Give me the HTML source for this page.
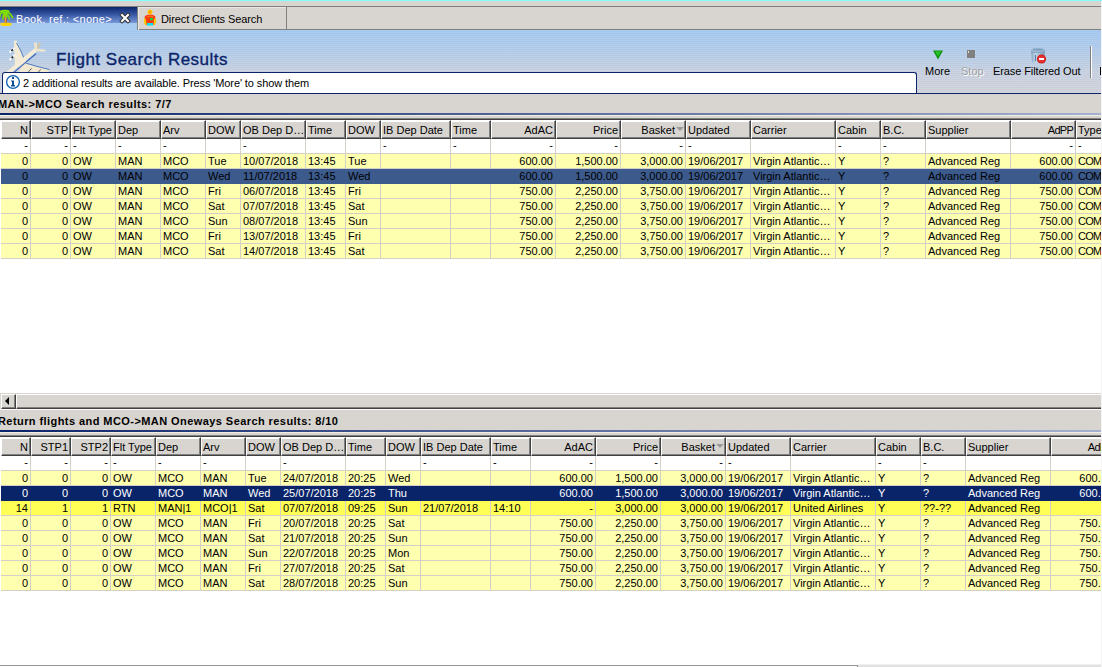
<!DOCTYPE html>
<html><head><meta charset="utf-8"><style>
*{margin:0;padding:0;box-sizing:border-box}
html,body{width:1102px;height:667px;overflow:hidden;background:#fff}
body{position:relative;font-family:"Liberation Sans", sans-serif;font-size:11px;color:#000}
.a{position:absolute}
.hdrrow{position:absolute;left:0;width:1101px;height:19px;background:#fff}
.hc{position:absolute;height:19px;background:#d8d5d0;border-top:1px solid #fff;border-left:1px solid #fff;
  border-right:1px solid #404040;border-bottom:1px solid #404040;
  padding:1px 1px 0 1px;line-height:16px;white-space:nowrap;overflow:hidden;box-shadow:inset -1px -1px 0 #808080, inset 0 1px 0 #fff}
.hc.r{text-align:right;padding-right:2px}
.frow{position:absolute;left:1px;width:1100px;height:15px;background:#fff}
.row{position:absolute;left:1px;width:1100px;height:15px;background:#ffffb0}
.row.sel1{background:#3c5a8c}
.row.sel2{background:#0a246a;color:#fff}
.row.rtn{background:#ffff55}
.c{position:absolute;top:0;height:14px;line-height:14px;padding:0 2px;white-space:nowrap;overflow:hidden}
.frow ~ .c{}
.c.r{text-align:right}
.vg{position:absolute;width:1px;background:#d4d0c8}
.hg{position:absolute;left:1px;width:1100px;height:1px;background:#d4d0c8}
.sort{position:absolute;left:54px;top:6px;width:0;height:0;border-left:4px solid transparent;border-right:4px solid transparent;border-top:4px solid #9a9a9a}
</style></head>
<body>
<div class="a" style="left:0;top:0;width:1102px;height:1px;background:#80ffff"></div>
<div class="a" style="left:0;top:1px;width:1101px;height:29px;background:#d8d5d0"></div>
<div class="a" style="left:0;top:6px;width:1101px;height:1px;background:#808080"></div>
<div class="a" style="left:137px;top:29px;width:964px;height:1px;background:#808080"></div>
<div class="a" style="left:0;top:7px;width:137px;height:23px;background:linear-gradient(#0a246a 0px,#3a5aa6 8px,#7494d6 15.5px,#a6caf0 16px,#a6caf0 23px)"></div>
<div class="a" style="left:16px;top:12px;color:#fff;line-height:14px;letter-spacing:0.3px">Book. ref.: &lt;none&gt;</div>
<div class="a" style="left:137px;top:6px;width:150px;height:24px;border:1px solid #808080;border-bottom:none;box-shadow:inset 1px 1px 0 #ebe8e2"></div>
<div class="a" style="left:161px;top:12px;line-height:14px;letter-spacing:-0.1px">Direct Clients Search</div>
<div class="a" style="left:0;top:30px;width:1101px;height:63px;background:repeating-linear-gradient(rgba(255,255,255,0.04) 0 1px,rgba(0,30,0,0.025) 1px 2px),linear-gradient(#a6caf2 0px,#b0ccee 15px,#bccfe6 30px,#cad2e2 42px,#d2d3dc 63px)"></div>
<div class="a" style="left:56px;top:50px;font-size:17px;letter-spacing:0.5px;color:#0a246a;line-height:20px;-webkit-text-stroke:0.35px #0a246a">Flight Search Results</div>
<div class="a" style="left:2px;top:72px;width:915px;height:21px;background:#fff;border:1px solid #0a246a;border-bottom:none;border-radius:3px 3px 0 0"></div>
<div class="a" style="left:23px;top:76px;line-height:14px;letter-spacing:-0.1px">2 additional results are available. Press 'More' to show them</div>
<div class="a" style="left:0;top:93px;width:1101px;height:1px;background:#0a246a"></div>
<div class="a" style="left:925px;top:64px;line-height:14px">More</div>
<div class="a" style="left:961px;top:64px;line-height:14px;color:#a0a0a0;text-shadow:1px 1px 0 #fff">Stop</div>
<div class="a" style="left:993px;top:64px;line-height:14px;letter-spacing:-0.1px">Erase Filtered Out</div>
<div class="a" style="left:1090px;top:46px;width:1px;height:32px;background:#808080;box-shadow:1px 0 0 #fff"></div>
<div class="a" style="left:0;top:94px;width:1101px;height:25px;background:#d8d5d0"></div>
<div class="a" style="left:-2px;top:97px;font-weight:bold;letter-spacing:0.43px;line-height:14px">MAN-&gt;MCO Search results: 7/7</div>
<div class="a" style="left:0;top:113px;width:1101px;height:2px;background:linear-gradient(90deg,#0a246a,#a6b0d0)"></div>
<div class="a" style="left:0;top:115px;width:1101px;height:1px;background:#f0ece0"></div>
<div class="a" style="left:0;top:118px;width:1101px;height:1px;background:#808080"></div>
<div class="a" style="left:0;top:119px;width:1101px;height:1px;background:#404040"></div>
<div class="hdrrow" style="top:120px"></div>
<div class="hc r" style="left:1px;top:120px;width:30px">N</div>
<div class="hc r" style="left:31px;top:120px;width:40px">STP</div>
<div class="hc" style="left:71px;top:120px;width:45px">Flt Type</div>
<div class="hc" style="left:116px;top:120px;width:45px">Dep</div>
<div class="hc" style="left:161px;top:120px;width:45px">Arv</div>
<div class="hc" style="left:206px;top:120px;width:35px">DOW</div>
<div class="hc" style="left:241px;top:120px;width:65px">OB Dep D…</div>
<div class="hc" style="left:306px;top:120px;width:40px">Time</div>
<div class="hc" style="left:346px;top:120px;width:35px">DOW</div>
<div class="hc" style="left:381px;top:120px;width:70px">IB Dep Date</div>
<div class="hc" style="left:451px;top:120px;width:40px">Time</div>
<div class="hc r" style="left:491px;top:120px;width:65px">AdAC</div>
<div class="hc r" style="left:556px;top:120px;width:65px">Price</div>
<div class="hc r" style="left:621px;top:120px;width:65px;padding-right:10px">Basket<i class="sort"></i></div>
<div class="hc" style="left:686px;top:120px;width:65px">Updated</div>
<div class="hc" style="left:751px;top:120px;width:85px">Carrier</div>
<div class="hc" style="left:836px;top:120px;width:45px">Cabin</div>
<div class="hc" style="left:881px;top:120px;width:45px">B.C.</div>
<div class="hc" style="left:926px;top:120px;width:85px">Supplier</div>
<div class="hc r" style="left:1011px;top:120px;width:65px;letter-spacing:-0.75px">AdPP</div>
<div class="hc" style="left:1076px;top:120px;width:65px">Type</div>
<div class="frow" style="top:139px"></div>
<div class="c r" style="left:1px;top:138px;width:29px;height:14px">-</div>
<div class="c r" style="left:31px;top:138px;width:39px;height:14px">-</div>
<div class="c" style="left:71px;top:138px;width:44px;height:14px">-</div>
<div class="c" style="left:116px;top:138px;width:44px;height:14px">-</div>
<div class="c" style="left:161px;top:138px;width:44px;height:14px">-</div>
<div class="c" style="left:206px;top:138px;width:34px;height:14px"></div>
<div class="c" style="left:241px;top:138px;width:64px;height:14px">-</div>
<div class="c" style="left:306px;top:138px;width:39px;height:14px"></div>
<div class="c" style="left:346px;top:138px;width:34px;height:14px"></div>
<div class="c" style="left:381px;top:138px;width:69px;height:14px">-</div>
<div class="c" style="left:451px;top:138px;width:39px;height:14px">-</div>
<div class="c r" style="left:491px;top:138px;width:64px;height:14px">-</div>
<div class="c r" style="left:556px;top:138px;width:64px;height:14px">-</div>
<div class="c r" style="left:621px;top:138px;width:64px;height:14px">-</div>
<div class="c" style="left:686px;top:138px;width:64px;height:14px">-</div>
<div class="c" style="left:751px;top:138px;width:84px;height:14px"></div>
<div class="c" style="left:836px;top:138px;width:44px;height:14px">-</div>
<div class="c" style="left:881px;top:138px;width:44px;height:14px">-</div>
<div class="c" style="left:926px;top:138px;width:84px;height:14px"></div>
<div class="c r" style="left:1011px;top:138px;width:64px;height:14px">-</div>
<div class="c" style="left:1076px;top:138px;width:64px;height:14px">-</div>
<div class="row" style="top:154px">
<div class="c r" style="left:0px;width:29px">0</div>
<div class="c r" style="left:30px;width:39px">0</div>
<div class="c" style="left:70px;width:44px">OW</div>
<div class="c" style="left:115px;width:44px">MAN</div>
<div class="c" style="left:160px;width:44px">MCO</div>
<div class="c" style="left:205px;width:34px">Tue</div>
<div class="c" style="left:240px;width:64px">10/07/2018</div>
<div class="c" style="left:305px;width:39px">13:45</div>
<div class="c" style="left:345px;width:34px">Tue</div>
<div class="c" style="left:380px;width:69px"></div>
<div class="c" style="left:450px;width:39px"></div>
<div class="c r" style="left:490px;width:64px">600.00</div>
<div class="c r" style="left:555px;width:64px">1,500.00</div>
<div class="c r" style="left:620px;width:64px">3,000.00</div>
<div class="c" style="left:685px;width:64px">19/06/2017</div>
<div class="c" style="left:750px;width:84px">Virgin Atlantic…</div>
<div class="c" style="left:835px;width:44px">Y</div>
<div class="c" style="left:880px;width:44px">?</div>
<div class="c" style="left:925px;width:84px">Advanced Reg</div>
<div class="c r" style="left:1010px;width:64px">600.00</div>
<div class="c" style="left:1075px;width:64px;letter-spacing:-0.7px">COM</div>
</div>
<div class="row sel1" style="top:169px">
<div class="c r" style="left:0px;width:29px">0</div>
<div class="c r" style="left:30px;width:39px">0</div>
<div class="c" style="left:70px;width:44px">OW</div>
<div class="c" style="left:115px;width:44px">MAN</div>
<div class="c" style="left:160px;width:44px">MCO</div>
<div class="c" style="left:205px;width:34px">Wed</div>
<div class="c" style="left:240px;width:64px">11/07/2018</div>
<div class="c" style="left:305px;width:39px">13:45</div>
<div class="c" style="left:345px;width:34px">Wed</div>
<div class="c" style="left:380px;width:69px"></div>
<div class="c" style="left:450px;width:39px"></div>
<div class="c r" style="left:490px;width:64px">600.00</div>
<div class="c r" style="left:555px;width:64px">1,500.00</div>
<div class="c r" style="left:620px;width:64px">3,000.00</div>
<div class="c" style="left:685px;width:64px">19/06/2017</div>
<div class="c" style="left:750px;width:84px">Virgin Atlantic…</div>
<div class="c" style="left:835px;width:44px">Y</div>
<div class="c" style="left:880px;width:44px">?</div>
<div class="c" style="left:925px;width:84px">Advanced Reg</div>
<div class="c r" style="left:1010px;width:64px">600.00</div>
<div class="c" style="left:1075px;width:64px;letter-spacing:-0.7px">COM</div>
</div>
<div class="row" style="top:184px">
<div class="c r" style="left:0px;width:29px">0</div>
<div class="c r" style="left:30px;width:39px">0</div>
<div class="c" style="left:70px;width:44px">OW</div>
<div class="c" style="left:115px;width:44px">MAN</div>
<div class="c" style="left:160px;width:44px">MCO</div>
<div class="c" style="left:205px;width:34px">Fri</div>
<div class="c" style="left:240px;width:64px">06/07/2018</div>
<div class="c" style="left:305px;width:39px">13:45</div>
<div class="c" style="left:345px;width:34px">Fri</div>
<div class="c" style="left:380px;width:69px"></div>
<div class="c" style="left:450px;width:39px"></div>
<div class="c r" style="left:490px;width:64px">750.00</div>
<div class="c r" style="left:555px;width:64px">2,250.00</div>
<div class="c r" style="left:620px;width:64px">3,750.00</div>
<div class="c" style="left:685px;width:64px">19/06/2017</div>
<div class="c" style="left:750px;width:84px">Virgin Atlantic…</div>
<div class="c" style="left:835px;width:44px">Y</div>
<div class="c" style="left:880px;width:44px">?</div>
<div class="c" style="left:925px;width:84px">Advanced Reg</div>
<div class="c r" style="left:1010px;width:64px">750.00</div>
<div class="c" style="left:1075px;width:64px;letter-spacing:-0.7px">COM</div>
</div>
<div class="row" style="top:199px">
<div class="c r" style="left:0px;width:29px">0</div>
<div class="c r" style="left:30px;width:39px">0</div>
<div class="c" style="left:70px;width:44px">OW</div>
<div class="c" style="left:115px;width:44px">MAN</div>
<div class="c" style="left:160px;width:44px">MCO</div>
<div class="c" style="left:205px;width:34px">Sat</div>
<div class="c" style="left:240px;width:64px">07/07/2018</div>
<div class="c" style="left:305px;width:39px">13:45</div>
<div class="c" style="left:345px;width:34px">Sat</div>
<div class="c" style="left:380px;width:69px"></div>
<div class="c" style="left:450px;width:39px"></div>
<div class="c r" style="left:490px;width:64px">750.00</div>
<div class="c r" style="left:555px;width:64px">2,250.00</div>
<div class="c r" style="left:620px;width:64px">3,750.00</div>
<div class="c" style="left:685px;width:64px">19/06/2017</div>
<div class="c" style="left:750px;width:84px">Virgin Atlantic…</div>
<div class="c" style="left:835px;width:44px">Y</div>
<div class="c" style="left:880px;width:44px">?</div>
<div class="c" style="left:925px;width:84px">Advanced Reg</div>
<div class="c r" style="left:1010px;width:64px">750.00</div>
<div class="c" style="left:1075px;width:64px;letter-spacing:-0.7px">COM</div>
</div>
<div class="row" style="top:214px">
<div class="c r" style="left:0px;width:29px">0</div>
<div class="c r" style="left:30px;width:39px">0</div>
<div class="c" style="left:70px;width:44px">OW</div>
<div class="c" style="left:115px;width:44px">MAN</div>
<div class="c" style="left:160px;width:44px">MCO</div>
<div class="c" style="left:205px;width:34px">Sun</div>
<div class="c" style="left:240px;width:64px">08/07/2018</div>
<div class="c" style="left:305px;width:39px">13:45</div>
<div class="c" style="left:345px;width:34px">Sun</div>
<div class="c" style="left:380px;width:69px"></div>
<div class="c" style="left:450px;width:39px"></div>
<div class="c r" style="left:490px;width:64px">750.00</div>
<div class="c r" style="left:555px;width:64px">2,250.00</div>
<div class="c r" style="left:620px;width:64px">3,750.00</div>
<div class="c" style="left:685px;width:64px">19/06/2017</div>
<div class="c" style="left:750px;width:84px">Virgin Atlantic…</div>
<div class="c" style="left:835px;width:44px">Y</div>
<div class="c" style="left:880px;width:44px">?</div>
<div class="c" style="left:925px;width:84px">Advanced Reg</div>
<div class="c r" style="left:1010px;width:64px">750.00</div>
<div class="c" style="left:1075px;width:64px;letter-spacing:-0.7px">COM</div>
</div>
<div class="row" style="top:229px">
<div class="c r" style="left:0px;width:29px">0</div>
<div class="c r" style="left:30px;width:39px">0</div>
<div class="c" style="left:70px;width:44px">OW</div>
<div class="c" style="left:115px;width:44px">MAN</div>
<div class="c" style="left:160px;width:44px">MCO</div>
<div class="c" style="left:205px;width:34px">Fri</div>
<div class="c" style="left:240px;width:64px">13/07/2018</div>
<div class="c" style="left:305px;width:39px">13:45</div>
<div class="c" style="left:345px;width:34px">Fri</div>
<div class="c" style="left:380px;width:69px"></div>
<div class="c" style="left:450px;width:39px"></div>
<div class="c r" style="left:490px;width:64px">750.00</div>
<div class="c r" style="left:555px;width:64px">2,250.00</div>
<div class="c r" style="left:620px;width:64px">3,750.00</div>
<div class="c" style="left:685px;width:64px">19/06/2017</div>
<div class="c" style="left:750px;width:84px">Virgin Atlantic…</div>
<div class="c" style="left:835px;width:44px">Y</div>
<div class="c" style="left:880px;width:44px">?</div>
<div class="c" style="left:925px;width:84px">Advanced Reg</div>
<div class="c r" style="left:1010px;width:64px">750.00</div>
<div class="c" style="left:1075px;width:64px;letter-spacing:-0.7px">COM</div>
</div>
<div class="row" style="top:244px">
<div class="c r" style="left:0px;width:29px">0</div>
<div class="c r" style="left:30px;width:39px">0</div>
<div class="c" style="left:70px;width:44px">OW</div>
<div class="c" style="left:115px;width:44px">MAN</div>
<div class="c" style="left:160px;width:44px">MCO</div>
<div class="c" style="left:205px;width:34px">Sat</div>
<div class="c" style="left:240px;width:64px">14/07/2018</div>
<div class="c" style="left:305px;width:39px">13:45</div>
<div class="c" style="left:345px;width:34px">Sat</div>
<div class="c" style="left:380px;width:69px"></div>
<div class="c" style="left:450px;width:39px"></div>
<div class="c r" style="left:490px;width:64px">750.00</div>
<div class="c r" style="left:555px;width:64px">2,250.00</div>
<div class="c r" style="left:620px;width:64px">3,750.00</div>
<div class="c" style="left:685px;width:64px">19/06/2017</div>
<div class="c" style="left:750px;width:84px">Virgin Atlantic…</div>
<div class="c" style="left:835px;width:44px">Y</div>
<div class="c" style="left:880px;width:44px">?</div>
<div class="c" style="left:925px;width:84px">Advanced Reg</div>
<div class="c r" style="left:1010px;width:64px">750.00</div>
<div class="c" style="left:1075px;width:64px;letter-spacing:-0.7px">COM</div>
</div>
<div class="vg" style="left:30px;top:139px;height:30px"></div>
<div class="vg" style="left:30px;top:184px;height:75px"></div>
<div class="vg" style="left:70px;top:139px;height:30px"></div>
<div class="vg" style="left:70px;top:184px;height:75px"></div>
<div class="vg" style="left:115px;top:139px;height:30px"></div>
<div class="vg" style="left:115px;top:184px;height:75px"></div>
<div class="vg" style="left:160px;top:139px;height:30px"></div>
<div class="vg" style="left:160px;top:184px;height:75px"></div>
<div class="vg" style="left:205px;top:139px;height:30px"></div>
<div class="vg" style="left:205px;top:184px;height:75px"></div>
<div class="vg" style="left:240px;top:139px;height:30px"></div>
<div class="vg" style="left:240px;top:184px;height:75px"></div>
<div class="vg" style="left:305px;top:139px;height:30px"></div>
<div class="vg" style="left:305px;top:184px;height:75px"></div>
<div class="vg" style="left:345px;top:139px;height:30px"></div>
<div class="vg" style="left:345px;top:184px;height:75px"></div>
<div class="vg" style="left:380px;top:139px;height:30px"></div>
<div class="vg" style="left:380px;top:184px;height:75px"></div>
<div class="vg" style="left:450px;top:139px;height:30px"></div>
<div class="vg" style="left:450px;top:184px;height:75px"></div>
<div class="vg" style="left:490px;top:139px;height:30px"></div>
<div class="vg" style="left:490px;top:184px;height:75px"></div>
<div class="vg" style="left:555px;top:139px;height:30px"></div>
<div class="vg" style="left:555px;top:184px;height:75px"></div>
<div class="vg" style="left:620px;top:139px;height:30px"></div>
<div class="vg" style="left:620px;top:184px;height:75px"></div>
<div class="vg" style="left:685px;top:139px;height:30px"></div>
<div class="vg" style="left:685px;top:184px;height:75px"></div>
<div class="vg" style="left:750px;top:139px;height:30px"></div>
<div class="vg" style="left:750px;top:184px;height:75px"></div>
<div class="vg" style="left:835px;top:139px;height:30px"></div>
<div class="vg" style="left:835px;top:184px;height:75px"></div>
<div class="vg" style="left:880px;top:139px;height:30px"></div>
<div class="vg" style="left:880px;top:184px;height:75px"></div>
<div class="vg" style="left:925px;top:139px;height:30px"></div>
<div class="vg" style="left:925px;top:184px;height:75px"></div>
<div class="vg" style="left:1010px;top:139px;height:30px"></div>
<div class="vg" style="left:1010px;top:184px;height:75px"></div>
<div class="vg" style="left:1075px;top:139px;height:30px"></div>
<div class="vg" style="left:1075px;top:184px;height:75px"></div>
<div class="vg" style="left:1140px;top:139px;height:30px"></div>
<div class="vg" style="left:1140px;top:184px;height:75px"></div>
<div class="hg" style="top:153px"></div>
<div class="hg" style="top:168px"></div>
<div class="hg" style="top:198px"></div>
<div class="hg" style="top:213px"></div>
<div class="hg" style="top:228px"></div>
<div class="hg" style="top:243px"></div>
<div class="hg" style="top:258px"></div>
<div class="a" style="left:0;top:393px;width:1101px;height:16px;background:#d8d5d0"></div>
<div class="a" style="left:1px;top:394px;width:15px;height:15px;border-top:1px solid #fff;border-left:1px solid #fff;border-right:1px solid #404040;border-bottom:1px solid #404040;box-shadow:inset -1px -1px 0 #808080"></div>
<div class="a" style="left:5px;top:397px;width:0;height:0;border-top:4px solid transparent;border-bottom:4px solid transparent;border-right:4px solid #000"></div>
<div class="a" style="left:16px;top:394px;width:1095px;height:15px;border-top:1px solid #fff;border-left:1px solid #fff;border-right:1px solid #404040;border-bottom:1px solid #404040;box-shadow:inset -1px -1px 0 #808080"></div>
<div class="a" style="left:0;top:409px;width:1101px;height:28px;background:#d8d5d0"></div>
<div class="a" style="left:0;top:409px;width:1101px;height:1px;background:#fbfaf8"></div>
<div class="a" style="left:-2px;top:414px;font-weight:bold;letter-spacing:0.43px;line-height:14px">Return flights and MCO-&gt;MAN Oneways Search results: 8/10</div>
<div class="a" style="left:0;top:430px;width:1101px;height:2px;background:linear-gradient(90deg,#0a246a,#a6b0d0)"></div>
<div class="a" style="left:0;top:432px;width:1101px;height:1px;background:#f0ece0"></div>
<div class="a" style="left:0;top:435px;width:1101px;height:1px;background:#808080"></div>
<div class="a" style="left:0;top:436px;width:1101px;height:1px;background:#404040"></div>
<div class="hdrrow" style="top:437px"></div>
<div class="hc r" style="left:1px;top:437px;width:30px">N</div>
<div class="hc r" style="left:31px;top:437px;width:40px">STP1</div>
<div class="hc r" style="left:71px;top:437px;width:40px">STP2</div>
<div class="hc" style="left:111px;top:437px;width:45px">Flt Type</div>
<div class="hc" style="left:156px;top:437px;width:45px">Dep</div>
<div class="hc" style="left:201px;top:437px;width:45px">Arv</div>
<div class="hc" style="left:246px;top:437px;width:35px">DOW</div>
<div class="hc" style="left:281px;top:437px;width:65px">OB Dep D…</div>
<div class="hc" style="left:346px;top:437px;width:40px">Time</div>
<div class="hc" style="left:386px;top:437px;width:35px">DOW</div>
<div class="hc" style="left:421px;top:437px;width:70px">IB Dep Date</div>
<div class="hc" style="left:491px;top:437px;width:40px">Time</div>
<div class="hc r" style="left:531px;top:437px;width:65px">AdAC</div>
<div class="hc r" style="left:596px;top:437px;width:65px">Price</div>
<div class="hc r" style="left:661px;top:437px;width:65px;padding-right:10px">Basket<i class="sort"></i></div>
<div class="hc" style="left:726px;top:437px;width:65px">Updated</div>
<div class="hc" style="left:791px;top:437px;width:85px">Carrier</div>
<div class="hc" style="left:876px;top:437px;width:45px">Cabin</div>
<div class="hc" style="left:921px;top:437px;width:45px">B.C.</div>
<div class="hc" style="left:966px;top:437px;width:85px">Supplier</div>
<div class="hc r" style="left:1051px;top:437px;width:65px;letter-spacing:-0.75px">AdPP</div>
<div class="frow" style="top:456px"></div>
<div class="c r" style="left:1px;top:455px;width:29px;height:14px">-</div>
<div class="c r" style="left:31px;top:455px;width:39px;height:14px">-</div>
<div class="c r" style="left:71px;top:455px;width:39px;height:14px">-</div>
<div class="c" style="left:111px;top:455px;width:44px;height:14px">-</div>
<div class="c" style="left:156px;top:455px;width:44px;height:14px">-</div>
<div class="c" style="left:201px;top:455px;width:44px;height:14px">-</div>
<div class="c" style="left:246px;top:455px;width:34px;height:14px"></div>
<div class="c" style="left:281px;top:455px;width:64px;height:14px">-</div>
<div class="c" style="left:346px;top:455px;width:39px;height:14px"></div>
<div class="c" style="left:386px;top:455px;width:34px;height:14px"></div>
<div class="c" style="left:421px;top:455px;width:69px;height:14px">-</div>
<div class="c" style="left:491px;top:455px;width:39px;height:14px">-</div>
<div class="c r" style="left:531px;top:455px;width:64px;height:14px">-</div>
<div class="c r" style="left:596px;top:455px;width:64px;height:14px">-</div>
<div class="c r" style="left:661px;top:455px;width:64px;height:14px">-</div>
<div class="c" style="left:726px;top:455px;width:64px;height:14px">-</div>
<div class="c" style="left:791px;top:455px;width:84px;height:14px"></div>
<div class="c" style="left:876px;top:455px;width:44px;height:14px">-</div>
<div class="c" style="left:921px;top:455px;width:44px;height:14px">-</div>
<div class="c" style="left:966px;top:455px;width:84px;height:14px"></div>
<div class="c r" style="left:1051px;top:455px;width:64px;height:14px"></div>
<div class="row" style="top:471px">
<div class="c r" style="left:0px;width:29px">0</div>
<div class="c r" style="left:30px;width:39px">0</div>
<div class="c r" style="left:70px;width:39px">0</div>
<div class="c" style="left:110px;width:44px">OW</div>
<div class="c" style="left:155px;width:44px">MCO</div>
<div class="c" style="left:200px;width:44px">MAN</div>
<div class="c" style="left:245px;width:34px">Tue</div>
<div class="c" style="left:280px;width:64px">24/07/2018</div>
<div class="c" style="left:345px;width:39px">20:25</div>
<div class="c" style="left:385px;width:34px">Wed</div>
<div class="c" style="left:420px;width:69px"></div>
<div class="c" style="left:490px;width:39px"></div>
<div class="c r" style="left:530px;width:64px">600.00</div>
<div class="c r" style="left:595px;width:64px">1,500.00</div>
<div class="c r" style="left:660px;width:64px">3,000.00</div>
<div class="c" style="left:725px;width:64px">19/06/2017</div>
<div class="c" style="left:790px;width:84px">Virgin Atlantic…</div>
<div class="c" style="left:875px;width:44px">Y</div>
<div class="c" style="left:920px;width:44px">?</div>
<div class="c" style="left:965px;width:84px">Advanced Reg</div>
<div class="c r" style="left:1050px;width:64px">600.00</div>
</div>
<div class="row sel2" style="top:486px">
<div class="c r" style="left:0px;width:29px">0</div>
<div class="c r" style="left:30px;width:39px">0</div>
<div class="c r" style="left:70px;width:39px">0</div>
<div class="c" style="left:110px;width:44px">OW</div>
<div class="c" style="left:155px;width:44px">MCO</div>
<div class="c" style="left:200px;width:44px">MAN</div>
<div class="c" style="left:245px;width:34px">Wed</div>
<div class="c" style="left:280px;width:64px">25/07/2018</div>
<div class="c" style="left:345px;width:39px">20:25</div>
<div class="c" style="left:385px;width:34px">Thu</div>
<div class="c" style="left:420px;width:69px"></div>
<div class="c" style="left:490px;width:39px"></div>
<div class="c r" style="left:530px;width:64px">600.00</div>
<div class="c r" style="left:595px;width:64px">1,500.00</div>
<div class="c r" style="left:660px;width:64px">3,000.00</div>
<div class="c" style="left:725px;width:64px">19/06/2017</div>
<div class="c" style="left:790px;width:84px">Virgin Atlantic…</div>
<div class="c" style="left:875px;width:44px">Y</div>
<div class="c" style="left:920px;width:44px">?</div>
<div class="c" style="left:965px;width:84px">Advanced Reg</div>
<div class="c r" style="left:1050px;width:64px">600.00</div>
</div>
<div class="row rtn" style="top:501px">
<div class="c r" style="left:0px;width:29px">14</div>
<div class="c r" style="left:30px;width:39px">1</div>
<div class="c r" style="left:70px;width:39px">1</div>
<div class="c" style="left:110px;width:44px">RTN</div>
<div class="c" style="left:155px;width:44px">MAN|1</div>
<div class="c" style="left:200px;width:44px">MCO|1</div>
<div class="c" style="left:245px;width:34px">Sat</div>
<div class="c" style="left:280px;width:64px">07/07/2018</div>
<div class="c" style="left:345px;width:39px">09:25</div>
<div class="c" style="left:385px;width:34px">Sun</div>
<div class="c" style="left:420px;width:69px">21/07/2018</div>
<div class="c" style="left:490px;width:39px">14:10</div>
<div class="c r" style="left:530px;width:64px">-</div>
<div class="c r" style="left:595px;width:64px">3,000.00</div>
<div class="c r" style="left:660px;width:64px">3,000.00</div>
<div class="c" style="left:725px;width:64px">19/06/2017</div>
<div class="c" style="left:790px;width:84px">United Airlines</div>
<div class="c" style="left:875px;width:44px">Y</div>
<div class="c" style="left:920px;width:44px">??-??</div>
<div class="c" style="left:965px;width:84px">Advanced Reg</div>
<div class="c r" style="left:1050px;width:64px"></div>
</div>
<div class="row" style="top:516px">
<div class="c r" style="left:0px;width:29px">0</div>
<div class="c r" style="left:30px;width:39px">0</div>
<div class="c r" style="left:70px;width:39px">0</div>
<div class="c" style="left:110px;width:44px">OW</div>
<div class="c" style="left:155px;width:44px">MCO</div>
<div class="c" style="left:200px;width:44px">MAN</div>
<div class="c" style="left:245px;width:34px">Fri</div>
<div class="c" style="left:280px;width:64px">20/07/2018</div>
<div class="c" style="left:345px;width:39px">20:25</div>
<div class="c" style="left:385px;width:34px">Sat</div>
<div class="c" style="left:420px;width:69px"></div>
<div class="c" style="left:490px;width:39px"></div>
<div class="c r" style="left:530px;width:64px">750.00</div>
<div class="c r" style="left:595px;width:64px">2,250.00</div>
<div class="c r" style="left:660px;width:64px">3,750.00</div>
<div class="c" style="left:725px;width:64px">19/06/2017</div>
<div class="c" style="left:790px;width:84px">Virgin Atlantic…</div>
<div class="c" style="left:875px;width:44px">Y</div>
<div class="c" style="left:920px;width:44px">?</div>
<div class="c" style="left:965px;width:84px">Advanced Reg</div>
<div class="c r" style="left:1050px;width:64px">750.00</div>
</div>
<div class="row" style="top:531px">
<div class="c r" style="left:0px;width:29px">0</div>
<div class="c r" style="left:30px;width:39px">0</div>
<div class="c r" style="left:70px;width:39px">0</div>
<div class="c" style="left:110px;width:44px">OW</div>
<div class="c" style="left:155px;width:44px">MCO</div>
<div class="c" style="left:200px;width:44px">MAN</div>
<div class="c" style="left:245px;width:34px">Sat</div>
<div class="c" style="left:280px;width:64px">21/07/2018</div>
<div class="c" style="left:345px;width:39px">20:25</div>
<div class="c" style="left:385px;width:34px">Sun</div>
<div class="c" style="left:420px;width:69px"></div>
<div class="c" style="left:490px;width:39px"></div>
<div class="c r" style="left:530px;width:64px">750.00</div>
<div class="c r" style="left:595px;width:64px">2,250.00</div>
<div class="c r" style="left:660px;width:64px">3,750.00</div>
<div class="c" style="left:725px;width:64px">19/06/2017</div>
<div class="c" style="left:790px;width:84px">Virgin Atlantic…</div>
<div class="c" style="left:875px;width:44px">Y</div>
<div class="c" style="left:920px;width:44px">?</div>
<div class="c" style="left:965px;width:84px">Advanced Reg</div>
<div class="c r" style="left:1050px;width:64px">750.00</div>
</div>
<div class="row" style="top:546px">
<div class="c r" style="left:0px;width:29px">0</div>
<div class="c r" style="left:30px;width:39px">0</div>
<div class="c r" style="left:70px;width:39px">0</div>
<div class="c" style="left:110px;width:44px">OW</div>
<div class="c" style="left:155px;width:44px">MCO</div>
<div class="c" style="left:200px;width:44px">MAN</div>
<div class="c" style="left:245px;width:34px">Sun</div>
<div class="c" style="left:280px;width:64px">22/07/2018</div>
<div class="c" style="left:345px;width:39px">20:25</div>
<div class="c" style="left:385px;width:34px">Mon</div>
<div class="c" style="left:420px;width:69px"></div>
<div class="c" style="left:490px;width:39px"></div>
<div class="c r" style="left:530px;width:64px">750.00</div>
<div class="c r" style="left:595px;width:64px">2,250.00</div>
<div class="c r" style="left:660px;width:64px">3,750.00</div>
<div class="c" style="left:725px;width:64px">19/06/2017</div>
<div class="c" style="left:790px;width:84px">Virgin Atlantic…</div>
<div class="c" style="left:875px;width:44px">Y</div>
<div class="c" style="left:920px;width:44px">?</div>
<div class="c" style="left:965px;width:84px">Advanced Reg</div>
<div class="c r" style="left:1050px;width:64px">750.00</div>
</div>
<div class="row" style="top:561px">
<div class="c r" style="left:0px;width:29px">0</div>
<div class="c r" style="left:30px;width:39px">0</div>
<div class="c r" style="left:70px;width:39px">0</div>
<div class="c" style="left:110px;width:44px">OW</div>
<div class="c" style="left:155px;width:44px">MCO</div>
<div class="c" style="left:200px;width:44px">MAN</div>
<div class="c" style="left:245px;width:34px">Fri</div>
<div class="c" style="left:280px;width:64px">27/07/2018</div>
<div class="c" style="left:345px;width:39px">20:25</div>
<div class="c" style="left:385px;width:34px">Sat</div>
<div class="c" style="left:420px;width:69px"></div>
<div class="c" style="left:490px;width:39px"></div>
<div class="c r" style="left:530px;width:64px">750.00</div>
<div class="c r" style="left:595px;width:64px">2,250.00</div>
<div class="c r" style="left:660px;width:64px">3,750.00</div>
<div class="c" style="left:725px;width:64px">19/06/2017</div>
<div class="c" style="left:790px;width:84px">Virgin Atlantic…</div>
<div class="c" style="left:875px;width:44px">Y</div>
<div class="c" style="left:920px;width:44px">?</div>
<div class="c" style="left:965px;width:84px">Advanced Reg</div>
<div class="c r" style="left:1050px;width:64px">750.00</div>
</div>
<div class="row" style="top:576px">
<div class="c r" style="left:0px;width:29px">0</div>
<div class="c r" style="left:30px;width:39px">0</div>
<div class="c r" style="left:70px;width:39px">0</div>
<div class="c" style="left:110px;width:44px">OW</div>
<div class="c" style="left:155px;width:44px">MCO</div>
<div class="c" style="left:200px;width:44px">MAN</div>
<div class="c" style="left:245px;width:34px">Sat</div>
<div class="c" style="left:280px;width:64px">28/07/2018</div>
<div class="c" style="left:345px;width:39px">20:25</div>
<div class="c" style="left:385px;width:34px">Sun</div>
<div class="c" style="left:420px;width:69px"></div>
<div class="c" style="left:490px;width:39px"></div>
<div class="c r" style="left:530px;width:64px">750.00</div>
<div class="c r" style="left:595px;width:64px">2,250.00</div>
<div class="c r" style="left:660px;width:64px">3,750.00</div>
<div class="c" style="left:725px;width:64px">19/06/2017</div>
<div class="c" style="left:790px;width:84px">Virgin Atlantic…</div>
<div class="c" style="left:875px;width:44px">Y</div>
<div class="c" style="left:920px;width:44px">?</div>
<div class="c" style="left:965px;width:84px">Advanced Reg</div>
<div class="c r" style="left:1050px;width:64px">750.00</div>
</div>
<div class="vg" style="left:30px;top:456px;height:30px"></div>
<div class="vg" style="left:30px;top:501px;height:90px"></div>
<div class="vg" style="left:70px;top:456px;height:30px"></div>
<div class="vg" style="left:70px;top:501px;height:90px"></div>
<div class="vg" style="left:110px;top:456px;height:30px"></div>
<div class="vg" style="left:110px;top:501px;height:90px"></div>
<div class="vg" style="left:155px;top:456px;height:30px"></div>
<div class="vg" style="left:155px;top:501px;height:90px"></div>
<div class="vg" style="left:200px;top:456px;height:30px"></div>
<div class="vg" style="left:200px;top:501px;height:90px"></div>
<div class="vg" style="left:245px;top:456px;height:30px"></div>
<div class="vg" style="left:245px;top:501px;height:90px"></div>
<div class="vg" style="left:280px;top:456px;height:30px"></div>
<div class="vg" style="left:280px;top:501px;height:90px"></div>
<div class="vg" style="left:345px;top:456px;height:30px"></div>
<div class="vg" style="left:345px;top:501px;height:90px"></div>
<div class="vg" style="left:385px;top:456px;height:30px"></div>
<div class="vg" style="left:385px;top:501px;height:90px"></div>
<div class="vg" style="left:420px;top:456px;height:30px"></div>
<div class="vg" style="left:420px;top:501px;height:90px"></div>
<div class="vg" style="left:490px;top:456px;height:30px"></div>
<div class="vg" style="left:490px;top:501px;height:90px"></div>
<div class="vg" style="left:530px;top:456px;height:30px"></div>
<div class="vg" style="left:530px;top:501px;height:90px"></div>
<div class="vg" style="left:595px;top:456px;height:30px"></div>
<div class="vg" style="left:595px;top:501px;height:90px"></div>
<div class="vg" style="left:660px;top:456px;height:30px"></div>
<div class="vg" style="left:660px;top:501px;height:90px"></div>
<div class="vg" style="left:725px;top:456px;height:30px"></div>
<div class="vg" style="left:725px;top:501px;height:90px"></div>
<div class="vg" style="left:790px;top:456px;height:30px"></div>
<div class="vg" style="left:790px;top:501px;height:90px"></div>
<div class="vg" style="left:875px;top:456px;height:30px"></div>
<div class="vg" style="left:875px;top:501px;height:90px"></div>
<div class="vg" style="left:920px;top:456px;height:30px"></div>
<div class="vg" style="left:920px;top:501px;height:90px"></div>
<div class="vg" style="left:965px;top:456px;height:30px"></div>
<div class="vg" style="left:965px;top:501px;height:90px"></div>
<div class="vg" style="left:1050px;top:456px;height:30px"></div>
<div class="vg" style="left:1050px;top:501px;height:90px"></div>
<div class="vg" style="left:1115px;top:456px;height:30px"></div>
<div class="vg" style="left:1115px;top:501px;height:90px"></div>
<div class="hg" style="top:470px"></div>
<div class="hg" style="top:485px"></div>
<div class="hg" style="top:515px"></div>
<div class="hg" style="top:530px"></div>
<div class="hg" style="top:545px"></div>
<div class="hg" style="top:560px"></div>
<div class="hg" style="top:575px"></div>
<div class="hg" style="top:590px"></div>
<svg class="a" style="left:0;top:0" width="1102" height="100" viewBox="0 0 1102 100">
<!-- palm tree -->
<path d="M0 23.5 Q6 21.5 12 23.5 L11 25.5 Q6 26.5 1 25.5 Z" fill="#ffd400"/>
<path d="M4 13.5 Q6.5 18 5.5 23" stroke="#c86a10" stroke-width="2" fill="none"/>
<path d="M4.2 13.5 Q6.2 18 5.2 23" stroke="#f0b030" stroke-width="0.9" fill="none"/>
<path d="M4.5 12.5 Q1 11 -0.5 17.5 M4.5 12.5 Q3 14 3 19 M4.5 12.5 Q9 10.5 12.5 17.5 M4.5 12.5 Q8 13.5 9.5 19 M4.5 12.5 Q5.5 15 6.5 17" stroke="#7ce000" stroke-width="1.7" fill="none" stroke-linecap="round"/>
<path d="M-0.5 12 Q4.5 9.5 9.5 11.5" stroke="#88e800" stroke-width="1.8" fill="none"/>
<!-- close X -->
<path d="M122 15 L128 21 M128 15 L122 21" stroke="#303030" stroke-width="3.9" stroke-linecap="square"/>
<path d="M122 15 L128 21 M128 15 L122 21" stroke="#fff" stroke-width="2" stroke-linecap="square"/>
<!-- person -->
<path d="M144.5 18 Q143 21 145 25 L147 24.5 Q146 21 147 18 Z" fill="#ffc800"/>
<path d="M155.5 18 Q157 21 155 25 L153 24.5 Q154 21 153 18 Z" fill="#ffc800"/>
<path d="M144.5 17 Q145.5 14.5 150 14.5 Q154.5 14.5 155.5 17 L154 20 L153.5 25 L146.5 25 L146 20 Z" fill="#ff3a10"/>
<path d="M147 17 L150 16 L153 17" stroke="#ff9000" stroke-width="0.8" fill="none"/>
<rect x="147" y="23" width="6" height="2.5" fill="#10e0e8"/>
<rect x="150" y="18" width="3" height="2.3" fill="#20d040"/>
<circle cx="150" cy="12" r="2.5" fill="#ffc800"/>
<rect x="148.8" y="11.6" width="2" height="0.9" fill="#ff5000"/>
<clipPath id="pc"><rect x="0" y="30" width="60" height="42"/></clipPath><g clip-path="url(#pc)">
<path d="M13.8 41 L16.2 40.5 L20 48 L24.5 58.5 L28 63 L20 67 L15 66 Z" fill="#f2ead4"/>
<path d="M16.5 43 L20.5 50 L24 58.5" stroke="#4a78c0" stroke-width="1" fill="none"/>
<path d="M9.5 52.5 L14.5 48 M9.5 60 L15 55" stroke="#fafafa" stroke-width="2"/>
<path d="M11.4 50.8 L12.9 49.4 M11.6 58.1 L13.1 56.7" stroke="#1a1a1a" stroke-width="1.6"/>
<path d="M18 73 L23 63 L30 64 L38 66.5 L49.5 69.2 L49 71.5 L44 73 Z" fill="#f0e8d0"/>
<path d="M26 63.2 Q38 66.8 49.5 69.6" stroke="#4a78c0" stroke-width="1" fill="none"/>
<path d="M28.5 71.8 L31.5 68.4 M38.2 72 L40.8 69.6" stroke="#505050" stroke-width="0.9"/>
<path d="M8.5 72.5 L35.5 50" stroke="#f4ecd6" stroke-width="3.8" stroke-linecap="round"/>
<path d="M12.5 73.5 L36.2 53.5" stroke="#3a68b8" stroke-width="1.1"/>
<path d="M33.8 42.5 L36.8 42.5 L37.5 49.5 L35 50 Z" fill="#eee4cc"/>
<path d="M38.5 42.5 L41 43 L38.5 49 L36.5 49 Z" fill="#d0c6ac"/>
<path d="M36 48.5 L45.5 49.8 L46 51 L43 51.8 L36 51 Z" fill="#f0e6ce"/>
</g>
<!-- info icon -->
<circle cx="13" cy="82" r="6.4" fill="#fff" stroke="#1464b4" stroke-width="1.4"/>
<rect x="12" y="77" width="2" height="2" fill="#0a4c9c"/>
<path d="M11 80.5 H14 V85 H15 V86.5 H11 V85 H12 V81.5 H11 Z" fill="#0a4c9c"/>
<!-- More triangle -->
<path d="M933 50.5 H943 L938 59.5 Z" fill="#0a900a"/>
<path d="M934.8 51.2 H941.2 L938 56.8 Z" fill="#28c028"/>
<!-- Stop square -->
<rect x="967" y="50" width="8" height="8" fill="#808080"/>
<rect x="968" y="51" width="1" height="2" fill="#e0e0e0"/>
<!-- bucket -->
<defs><linearGradient id="bk" x1="0" x2="1" y1="0" y2="0"><stop offset="0" stop-color="#8aa8c4"/><stop offset="0.35" stop-color="#c0d6e8"/><stop offset="1" stop-color="#7896b4"/></linearGradient></defs>
<path d="M1031 50 L1045 50 L1044 62.5 L1032 62.5 Z" fill="url(#bk)"/>
<rect x="1031" y="51.5" width="14" height="1.5" fill="#86a6c2"/>
<ellipse cx="1038" cy="49.5" rx="7" ry="2" fill="#a8c4dc"/>
<ellipse cx="1038" cy="49.6" rx="5.5" ry="1.2" fill="#7e9ec0"/>
<rect x="1035" y="55" width="1" height="6" fill="#5a80a8"/>
<circle cx="1041.5" cy="59" r="4.6" fill="#d02020"/>
<circle cx="1041.5" cy="59" r="3.6" fill="#e83030"/>
<rect x="1039" y="58" width="5" height="2" fill="#fff"/>
</svg>
<div class="a" style="left:1100px;top:67px;width:1px;height:8px;background:#000"></div>
<div class="a" style="left:0;top:665px;width:857px;height:1px;background:#939393"></div>
<div class="a" style="left:857px;top:665px;width:1px;height:2px;background:#939393"></div>
<div class="a" style="left:858px;top:665px;width:244px;height:2px;background:#e2e2e2"></div>
<div class="a" style="left:858px;top:664px;width:244px;height:1px;background:#f0f0f0"></div>
<div class="a" style="left:1101px;top:1px;width:1px;height:666px;background:#f4f4f4"></div>
</body></html>
